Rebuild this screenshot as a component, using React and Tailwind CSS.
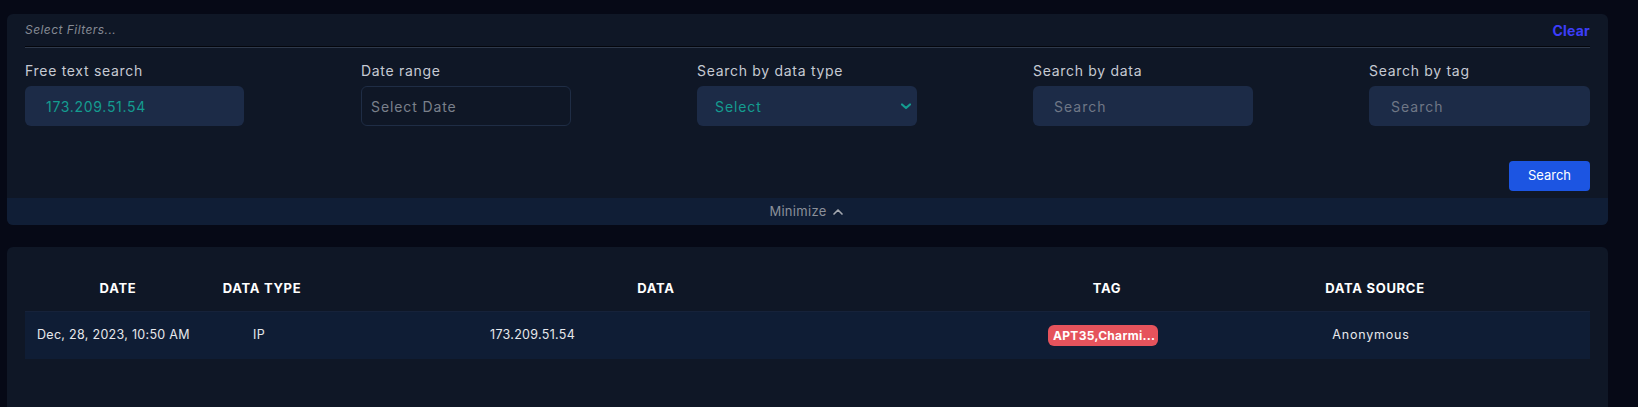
import { ChevronUp } from 'lucide-react';

const font = { fontFamily: 'Inter, "Open Sans", sans-serif' };

const FilterField = ({ label, children }) => (
    <div className="flex flex-col w-[221px]">
        <label className="text-[14px] leading-5 text-[#c6cad3] tracking-[0.7px] mb-[5px]">{label}</label>
        {children}
    </div>
);

const rows = [
    {
        date: 'Dec, 28, 2023, 10:50 AM',
        type: 'IP',
        data: '173.209.51.54',
        tag: 'APT35,Charmi...',
        source: 'Anonymous'
    }
];

const App = () => {
    return (
        <div className="w-[1638px] h-[407px] overflow-hidden bg-[#060916] pl-[7px] pr-[30px] pt-[14px]" style={font}>
            {/* Filters card */}
            <div className="bg-[#0f1726] rounded-md overflow-hidden">
                <div className="px-[18px]">
                    <div className="flex items-center justify-between h-[32px]">
                        <span className="text-[12px] italic text-[#858a94] tracking-[0.45px]">Select Filters...</span>
                        <button className="text-[14px] font-bold text-[#3d3dfa] tracking-[0.2px]">Clear</button>
                    </div>
                    <div className="border-t border-[#04060c] border-b border-b-[#2e394b]"></div>

                    <div className="flex justify-between mt-[13px]">
                        <FilterField label="Free text search">
                            <input
                                readOnly
                                value="173.209.51.54"
                                className="h-[40px] w-[219px] rounded-md bg-[#1c2b47] pl-[21px] text-[14px] tracking-[0.7px] text-[#149c90] outline-none"
                            />
                        </FilterField>
                        <FilterField label="Date range">
                            <input
                                readOnly
                                placeholder="Select Date"
                                className="h-[40px] w-[210px] rounded-md bg-transparent border border-[#1f2d45] pl-[9px] text-[14px] tracking-[0.9px] text-[#c6cad3] placeholder:text-[#7a808b] outline-none"
                            />
                        </FilterField>
                        <FilterField label="Search by data type">
                            <div className="h-[40px] w-[220px] rounded-md bg-[#1c2b47] pl-[18px] pr-[5px] flex items-center justify-between">
                                <span className="text-[14px] tracking-[0.9px] text-[#149c90]">Select</span>
                                <svg width="12" height="10" viewBox="0 0 12 10" fill="none">
                                    <path d="M2 3.5L6 7L10 3.5" stroke="#149c90" strokeWidth="2.2" strokeLinecap="round" strokeLinejoin="round" />
                                </svg>
                            </div>
                        </FilterField>
                        <FilterField label="Search by data">
                            <input
                                readOnly
                                placeholder="Search"
                                className="h-[40px] w-[220px] rounded-md bg-[#1c2b47] pl-[21px] text-[14px] tracking-[1px] placeholder:text-[#6f7786] outline-none"
                            />
                        </FilterField>
                        <FilterField label="Search by tag">
                            <input
                                readOnly
                                placeholder="Search"
                                className="h-[40px] w-[221px] rounded-md bg-[#1c2b47] pl-[22px] text-[14px] tracking-[1px] placeholder:text-[#6f7786] outline-none"
                            />
                        </FilterField>
                    </div>

                    <div className="flex justify-end mt-[35px] pb-[7px]">
                        <button className="h-[30px] w-[81px] rounded-[4px] bg-[#1c55e2] text-[13px] text-white">Search</button>
                    </div>
                </div>

                <div className="h-[27px] bg-[#101e36] flex items-center justify-center gap-[3px] text-[13px] tracking-[0.3px] text-[#8b909a]">
                    <span>Minimize</span>
                    <ChevronUp size={16} strokeWidth={2.5} className="text-[#a4a8b0]" />
                </div>
            </div>

            {/* Results card */}
            <div className="mt-[22px] bg-[#0f1726] rounded-md px-[18px] h-[200px]">
                <div className="grid grid-cols-[186px_102px_686px_216px_320px_1fr] h-[64px] items-end pb-[13px] text-[13px] font-bold text-white uppercase tracking-[0.7px]">
                    <div className="text-center">Date</div>
                    <div className="text-center">Data Type</div>
                    <div className="text-center">Data</div>
                    <div className="text-center">Tag</div>
                    <div className="text-center">Data Source</div>
                    <div></div>
                </div>
                {rows.map((row, i) => (
                    <div key={i} className="grid grid-cols-[186px_102px_686px_216px_320px_1fr] h-[48px] items-center bg-[#0f1d35] border-t border-[#16223a] text-[12.5px] tracking-[0.3px] text-[#e6e8ec]">
                        <div className="pl-[12px]">{row.date}</div>
                        <div className="text-center pr-[6px]">{row.type}</div>
                        <div className="pl-[177px]">{row.data}</div>
                        <div className="flex justify-center pr-[8px]">
                            <span className="w-[110px] h-[21px] rounded-md bg-[#e5535c] pl-[5px] text-[12px] font-bold text-white leading-[21px] whitespace-nowrap">
                                {row.tag}
                            </span>
                        </div>
                        <div className="text-center pr-[8px] tracking-[0.8px]">{row.source}</div>
                        <div></div>
                    </div>
                ))}
            </div>
        </div>
    );
};

export default App;
